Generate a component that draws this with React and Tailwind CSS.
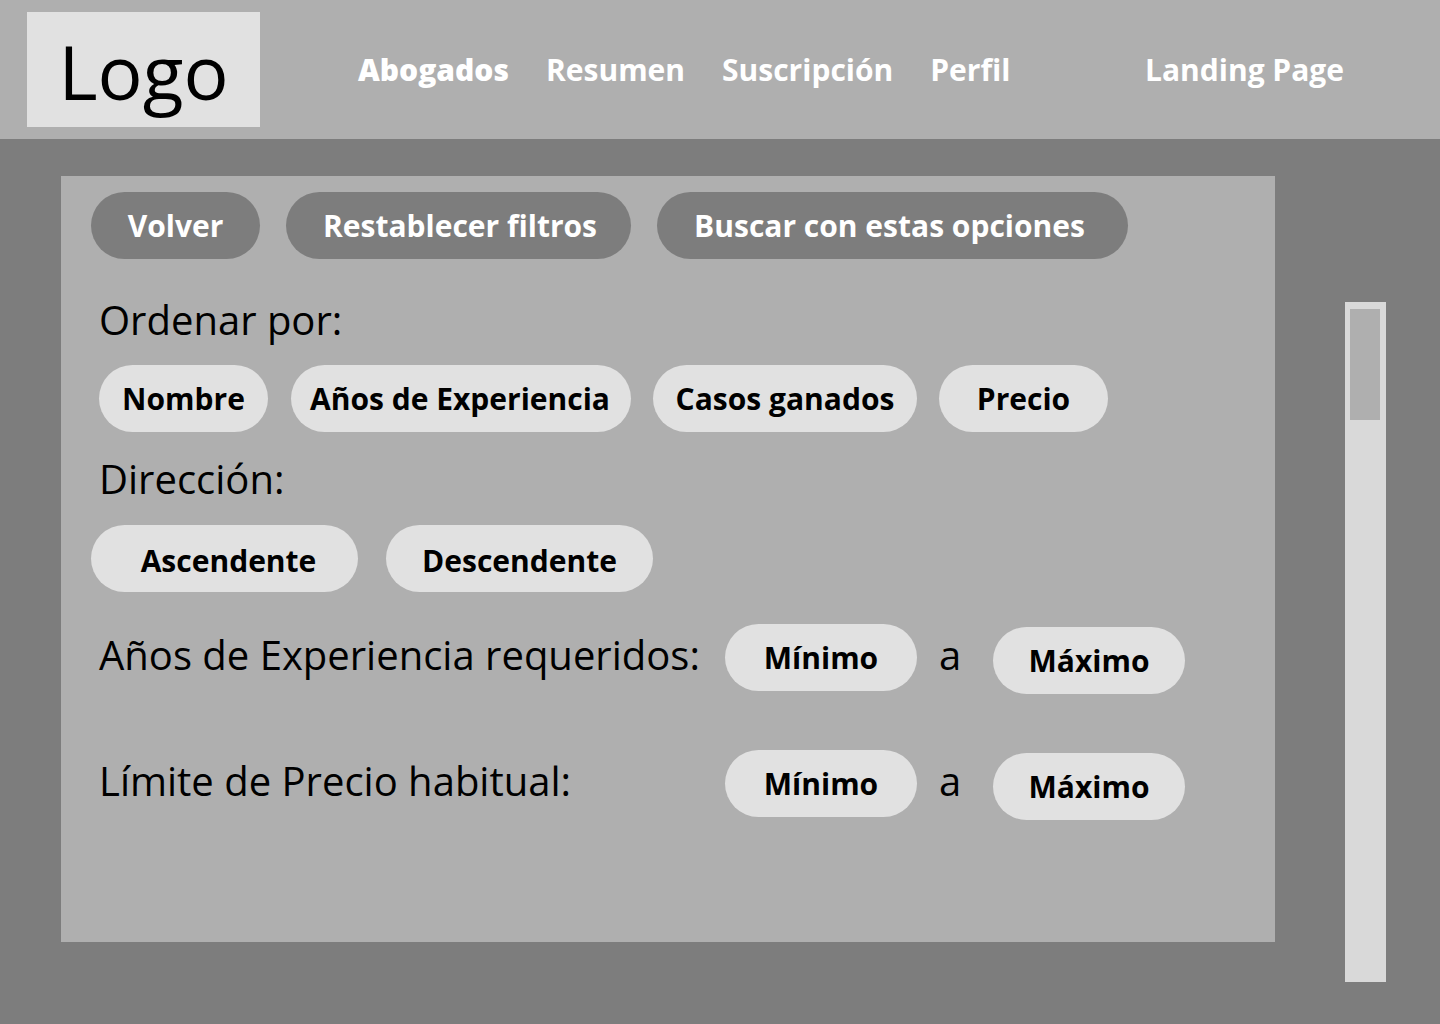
const pill = 'flex h-[67px] shrink-0 items-center justify-center rounded-full text-[30px] leading-none whitespace-nowrap';
const dark = 'bg-[#7d7d7d] font-bold text-white';
const light = 'bg-[#e1e1e1] font-bold text-black';

function Pill({ tone = light, className = '', children }) {
  return (
    <button type="button" className={`${pill} ${tone} ${className}`}>
      {children}
    </button>
  );
}

function RangeRow({ label, className = '' }) {
  return (
    <div role="group" aria-label={label} className={`flex items-start ${className}`}>
      <span className="w-[626px] pt-1 text-[40px] leading-[54px] whitespace-nowrap">{label}</span>
      <Pill className="w-48">Mínimo</Pill>
      <span className="w-[76px] pt-1 pl-[22px] text-[40px] leading-[54px]">a</span>
      <Pill className="mt-[3px] w-48">Máximo</Pill>
    </div>
  );
}

export default function App() {
  return (
    <div className="flex min-h-screen flex-col bg-[#7d7d7d] font-['Open_Sans',sans-serif] text-black">
      <header className="flex items-center bg-[#afafaf] py-3 pr-24 pl-[27px] text-[30px] leading-10 whitespace-nowrap text-white">
        <div className="w-[233px] bg-[#e1e1e1] pt-[7px] pb-1 text-center text-[75px] leading-[104px] text-black">
          Logo
        </div>
        <nav className="ml-[98px] flex grow gap-[37px] font-bold">
          <a href="#abogados" className="font-extrabold">Abogados</a>
          <a href="#resumen">Resumen</a>
          <a href="#suscripcion">Suscripción</a>
          <a href="#perfil">Perfil</a>
          <a href="#landing" className="ml-auto">Landing Page</a>
        </nav>
      </header>

      <div className="flex grow items-stretch pr-[54px] pl-[61px]">
        <main className="mt-[37px] mb-[82px] grow bg-[#afafaf] pt-4 pl-[30px]">
          <div className="flex gap-[26px]">
            <Pill tone={dark} className="w-[169px]">Volver</Pill>
            <Pill tone={dark} className="w-[345px] pl-[3px]">Restablecer filtros</Pill>
            <Pill tone={dark} className="w-[471px] pr-1.5">Buscar con estas opciones</Pill>
          </div>

          <h2 className="mt-[34px] ml-2 text-[40px] leading-[54px]">Ordenar por:</h2>
          <div className="mt-[18px] ml-2 flex gap-[22px]">
            <Pill className="mr-px w-[169px]">Nombre</Pill>
            <Pill className="w-[340px] pr-0.5">Años de Experiencia</Pill>
            <Pill className="w-[264px]">Casos ganados</Pill>
            <Pill className="w-[169px]">Precio</Pill>
          </div>

          <h2 className="mt-5 ml-2 text-[40px] leading-[54px]">Dirección:</h2>
          <div className="mt-[19px] flex gap-7">
            <Pill className="w-[267px] pt-1 pl-2">Ascendente</Pill>
            <Pill className="w-[267px] pt-1">Descendente</Pill>
          </div>

          <RangeRow label="Años de Experiencia requeridos:" className="mt-8 ml-2" />
          <RangeRow label="Límite de Precio habitual:" className="mt-14 ml-2" />
        </main>

        <div className="mt-[163px] mb-[42px] ml-[70px] w-[41px] shrink-0 bg-[#d9d9d9] pt-[7px] pl-[5px]">
          <div className="h-[111px] w-[30px] bg-[#afafaf]" />
        </div>
      </div>
    </div>
  );
}
